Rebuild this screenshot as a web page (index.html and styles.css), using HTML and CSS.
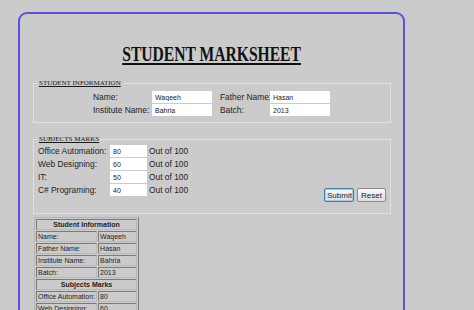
FILE: index.html
```html
<!DOCTYPE html>
<html>
<head>
<meta charset="utf-8">
<link rel="stylesheet" href="styles.css">
</head>
<body>
<div class="sheet">
  <h1 class="title"><span class="title-text">STUDENT MARKSHEET</span></h1>
  <form class="form">
    <fieldset class="box box-info">
      <legend class="legend">STUDENT INFORMATION</legend>
      <div class="info-grid">
        <span class="lbl">Name:</span>
        <input class="field field-wide" type="text" value="Waqeeh">
        <span class="lbl lbl-pad">Father Name:</span>
        <input class="field field-wide" type="text" value="Hasan">
        <span class="lbl">Institute Name:</span>
        <input class="field field-wide" type="text" value="Bahria">
        <span class="lbl lbl-pad">Batch:</span>
        <input class="field field-wide" type="text" value="2013">
      </div>
    </fieldset>
    <fieldset class="box box-marks">
      <legend class="legend">SUBJECTS MARKS</legend>
      <div class="marks">
        <div class="marks-grid">
          <span class="lbl">Office Automation:</span>
          <input class="field field-mark" type="text" value="80">
          <span class="lbl">Out of 100</span>
          <span class="lbl">Web Designing:</span>
          <input class="field field-mark" type="text" value="60">
          <span class="lbl">Out of 100</span>
          <span class="lbl">IT:</span>
          <input class="field field-mark" type="text" value="50">
          <span class="lbl">Out of 100</span>
          <span class="lbl">C# Programing:</span>
          <input class="field field-mark" type="text" value="40">
          <span class="lbl">Out of 100</span>
        </div>
        <div class="buttons">
          <button class="btn btn-submit" type="button">Submit</button>
          <button class="btn" type="button">Reset</button>
        </div>
      </div>
    </fieldset>
  </form>
  <table class="result">
    <tr><th colspan="2">Student Information</th></tr>
    <tr><td class="k">Name:</td><td class="v">Waqeeh</td></tr>
    <tr><td class="k">Father Name:</td><td class="v">Hasan</td></tr>
    <tr><td class="k">Institute Name:</td><td class="v">Bahria</td></tr>
    <tr><td class="k">Batch:</td><td class="v">2013</td></tr>
    <tr><th colspan="2">Subjects Marks</th></tr>
    <tr><td class="k">Office Automation:</td><td class="v">80</td></tr>
    <tr><td class="k">Web Designing:</td><td class="v">60</td></tr>
  </table>
</div>
</body>
</html>
```
FILE: styles.css
```css
html, body {
  margin: 0;
  padding: 0;
  background: #cbcbcb;
  overflow: hidden;
}

.sheet {
  margin: 12px 0 0 18px;
  width: 383px;
  height: 400px;
  border: 2px solid #5a52e2;
  border-radius: 9px;
  font-family: "Liberation Sans", Arial, sans-serif;
}

.title {
  margin: 29px 0 0 0;
  text-align: center;
  font-family: "Liberation Serif", "Times New Roman", serif;
  font-weight: bold;
  font-size: 20px;
  line-height: 22px;
  color: #111;
}

.title-text {
  display: inline-block;
  transform: scaleX(0.78);
  text-decoration: underline;
  text-decoration-thickness: 2px;
  text-underline-offset: 2px;
}

.form {
  margin: 14px 12px 0 13px;
}

.box {
  margin: 0;
  border: 1px solid #e0e0e0;
  padding: 0;
  min-inline-size: 0;
}

.box-info {
  padding: 4px 0 6px 0;
}

.box-marks {
  margin-top: 12px;
  padding: 2px 0 17px 0;
}

.legend {
  margin-left: 4px;
  padding: 0 1px;
  font-family: "Liberation Serif", "Times New Roman", serif;
  font-size: 7px;
  line-height: 8px;
  text-decoration: underline;
  color: #1a1a1a;
}

.lbl {
  font-size: 8.4px;
  line-height: 12px;
  color: #222;
  white-space: nowrap;
}

.lbl-pad {
  padding-left: 8px;
}

.info-grid {
  display: grid;
  grid-template-columns: 59px 60px 58px 60px;
  row-gap: 1px;
  margin-left: 59px;
  align-items: center;
}

.field {
  box-sizing: border-box;
  height: 12px;
  border: 1px solid #fff;
  background: #fff;
  padding: 0 2px;
  font-family: "Liberation Sans", Arial, sans-serif;
  font-size: 7px;
  color: #222;
  outline: none;
}

.field-wide {
  width: 60px;
}

.field-mark {
  width: 37px;
}

.marks {
  display: flex;
  align-items: flex-end;
  justify-content: space-between;
  padding: 0 4px 0 4px;
}

.marks-grid {
  display: grid;
  grid-template-columns: 72px 39px auto;
  row-gap: 1px;
  align-items: center;
}

.buttons {
  display: flex;
  gap: 3px;
  margin-bottom: -6px;
}

.btn {
  height: 14px;
  box-sizing: border-box;
  padding: 0 2px;
  font-family: "Liberation Sans", Arial, sans-serif;
  font-size: 8px;
  color: #222;
  background: linear-gradient(#fafafa, #dedede);
  border: 1px solid #8a8a8a;
  border-radius: 2px;
}

.btn-submit {
  width: 30px;
  border-color: #3c7fb1;
  box-shadow: 0 0 0 1px #9ccbea inset;
}

.btn:last-child {
  width: 29px;
}

.result {
  margin: 3px 0 0 14px;
  border: 1px solid;
  border-color: #b5b5b5 #7a7a7a #7a7a7a #b5b5b5;
  border-spacing: 1px;
  width: 105px;
  font-size: 7px;
  color: #222;
}

.result th,
.result td {
  border: 1px solid;
  border-color: #7a7a7a #b9b9b9 #b9b9b9 #7a7a7a;
  padding: 0 1px;
  height: 9px;
  line-height: 9px;
  white-space: nowrap;
}

.result th {
  text-align: center;
}

.result .k {
  width: 53px;
}
```
